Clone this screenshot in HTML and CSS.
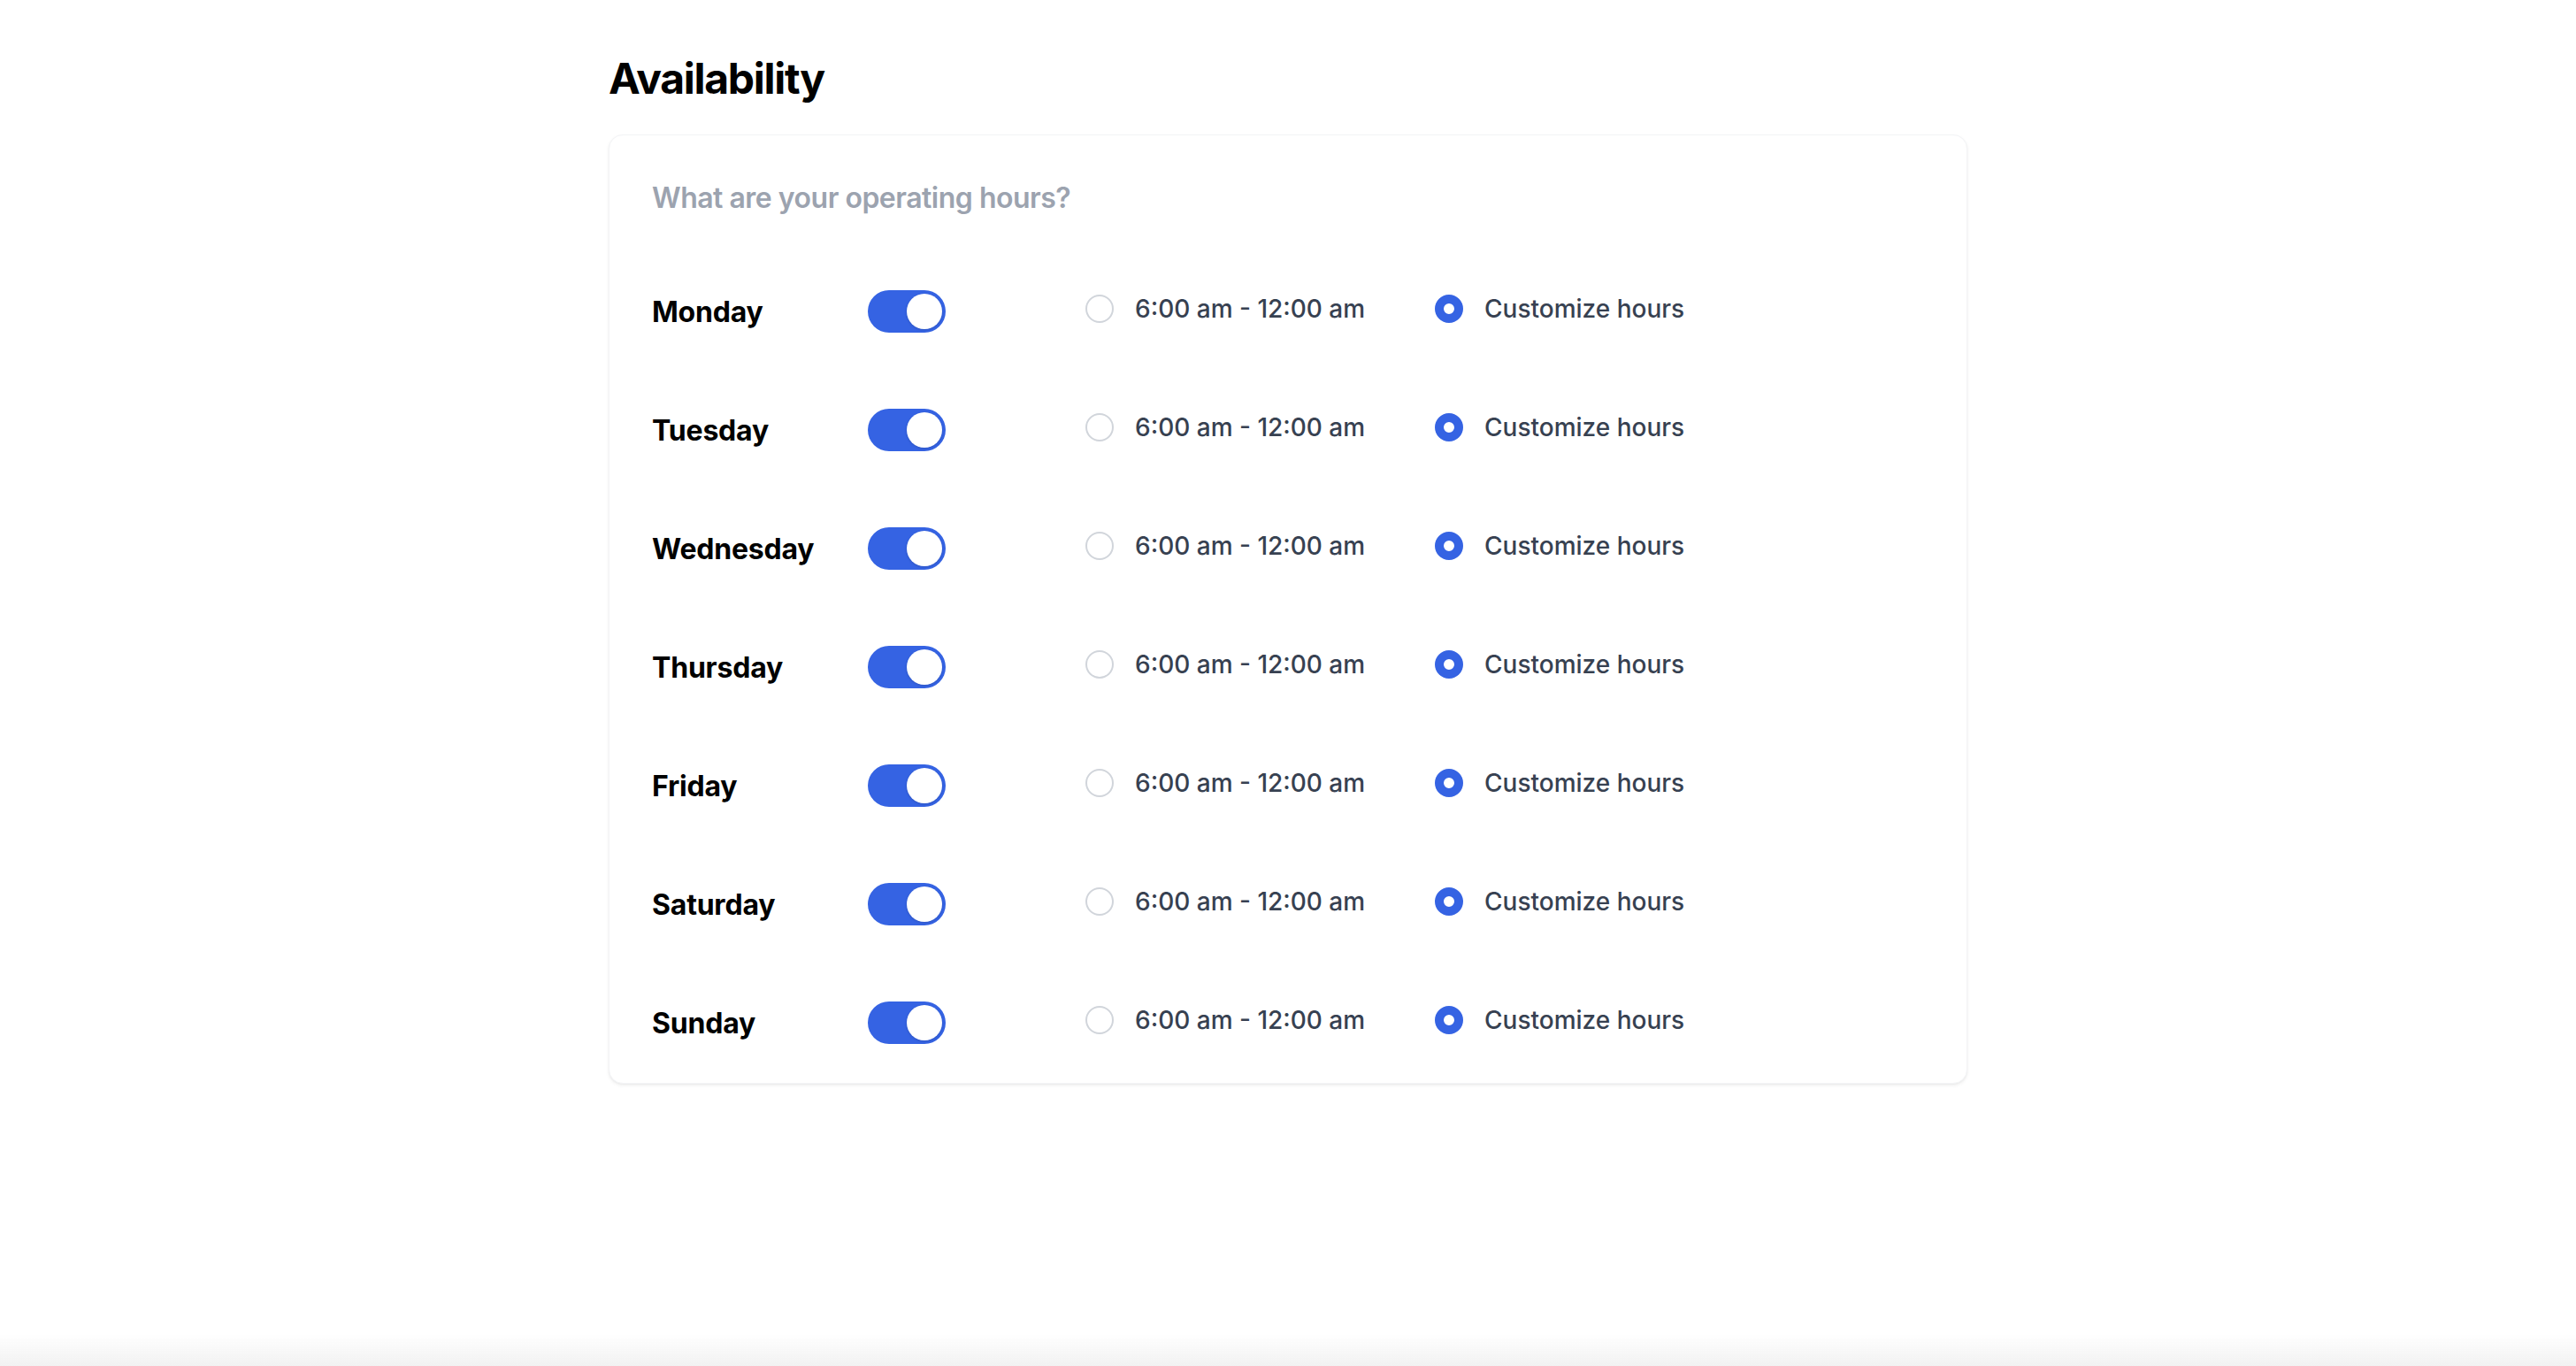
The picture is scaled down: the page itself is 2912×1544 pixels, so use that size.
FILE: index.html
```html
<!DOCTYPE html>
<html lang="en">
<head>
<meta charset="utf-8">
<title>Availability</title>
<link rel="stylesheet" href="styles.css">
</head>
<body>
<main class="page">
  <h1 class="title">Availability</h1>
  <section class="card">
    <p class="subtitle">What are your operating hours?</p>
    <div class="rows">
      <div class="row">
        <span class="day">Monday</span>
        <span class="toggle"><span class="knob"></span></span>
        <div class="options">
          <label class="option option-first"><span class="radio"></span><span class="option-text">6:00 am - 12:00 am</span></label>
          <label class="option"><span class="radio radio-on"></span><span class="option-text">Customize hours</span></label>
        </div>
      </div>
      <div class="row">
        <span class="day">Tuesday</span>
        <span class="toggle"><span class="knob"></span></span>
        <div class="options">
          <label class="option option-first"><span class="radio"></span><span class="option-text">6:00 am - 12:00 am</span></label>
          <label class="option"><span class="radio radio-on"></span><span class="option-text">Customize hours</span></label>
        </div>
      </div>
      <div class="row">
        <span class="day">Wednesday</span>
        <span class="toggle"><span class="knob"></span></span>
        <div class="options">
          <label class="option option-first"><span class="radio"></span><span class="option-text">6:00 am - 12:00 am</span></label>
          <label class="option"><span class="radio radio-on"></span><span class="option-text">Customize hours</span></label>
        </div>
      </div>
      <div class="row">
        <span class="day">Thursday</span>
        <span class="toggle"><span class="knob"></span></span>
        <div class="options">
          <label class="option option-first"><span class="radio"></span><span class="option-text">6:00 am - 12:00 am</span></label>
          <label class="option"><span class="radio radio-on"></span><span class="option-text">Customize hours</span></label>
        </div>
      </div>
      <div class="row">
        <span class="day">Friday</span>
        <span class="toggle"><span class="knob"></span></span>
        <div class="options">
          <label class="option option-first"><span class="radio"></span><span class="option-text">6:00 am - 12:00 am</span></label>
          <label class="option"><span class="radio radio-on"></span><span class="option-text">Customize hours</span></label>
        </div>
      </div>
      <div class="row">
        <span class="day">Saturday</span>
        <span class="toggle"><span class="knob"></span></span>
        <div class="options">
          <label class="option option-first"><span class="radio"></span><span class="option-text">6:00 am - 12:00 am</span></label>
          <label class="option"><span class="radio radio-on"></span><span class="option-text">Customize hours</span></label>
        </div>
      </div>
      <div class="row">
        <span class="day">Sunday</span>
        <span class="toggle"><span class="knob"></span></span>
        <div class="options">
          <label class="option option-first"><span class="radio"></span><span class="option-text">6:00 am - 12:00 am</span></label>
          <label class="option"><span class="radio radio-on"></span><span class="option-text">Customize hours</span></label>
        </div>
      </div>
    </div>
  </section>
</main>
<div class="window-fade"></div>
</body>
</html>
```
FILE: styles.css
```css
* { box-sizing: border-box; }

html, body {
  margin: 0;
  padding: 0;
  background: #ffffff;
}

body {
  font-family: Inter, "Noto Sans", "Liberation Sans", sans-serif;
  color: #000000;
  min-height: 1544px;
}

.page {
  width: 1536px;
  margin: 0 auto;
  padding-top: 57px;
}

.title {
  margin: 0 0 31px 0;
  font-size: 48px;
  line-height: 64px;
  font-weight: 700;
  letter-spacing: -1.3px;
}

.card {
  background: #ffffff;
  border-radius: 16px;
  border: 1px solid #f3f4f6;
  box-shadow: 0 2px 4px rgba(0, 0, 0, 0.06), 0 1px 2px rgba(0, 0, 0, 0.04);
  padding: 47px 47px 44px 48px;
}

.subtitle {
  margin: 0;
  font-size: 32px;
  line-height: 48px;
  font-weight: 600;
  letter-spacing: -0.5px;
  color: #9ca3af;
}

.rows {
  margin-top: 80px;
  display: flex;
  flex-direction: column;
  gap: 86px;
}

.row {
  display: flex;
  align-items: center;
  height: 48px;
}

.day {
  width: 244px;
  font-size: 32px;
  line-height: 48px;
  font-weight: 700;
  margin-top: 2px;
  letter-spacing: -0.2px;
}

.toggle {
  position: relative;
  width: 88px;
  height: 48px;
  border-radius: 24px;
  background: #3563e3;
  flex: none;
}

.knob {
  position: absolute;
  top: 4px;
  right: 4px;
  width: 40px;
  height: 40px;
  border-radius: 50%;
  background: #ffffff;
  box-shadow: 0 1px 3px rgba(0, 0, 0, 0.15);
}

.options {
  display: flex;
  align-items: center;
  margin-left: 158px;
  margin-bottom: 6px;
}

.option {
  display: flex;
  align-items: center;
  gap: 24px;
}

.option-first {
  width: 395px;
}

.radio {
  width: 32px;
  height: 32px;
  border-radius: 50%;
  border: 2px solid #d1d5db;
  background: #ffffff;
  flex: none;
}

.radio-on {
  border: 10px solid #3563e3;
  background: #ffffff;
}

.option-text {
  font-size: 28px;
  line-height: 40px;
  font-weight: 500;
  color: #374151;
}

.window-fade {
  position: fixed;
  left: 0;
  right: 0;
  bottom: 0;
  height: 36px;
  background: linear-gradient(to bottom, rgba(240, 240, 240, 0), rgba(240, 240, 240, 0.9));
  pointer-events: none;
}
```
